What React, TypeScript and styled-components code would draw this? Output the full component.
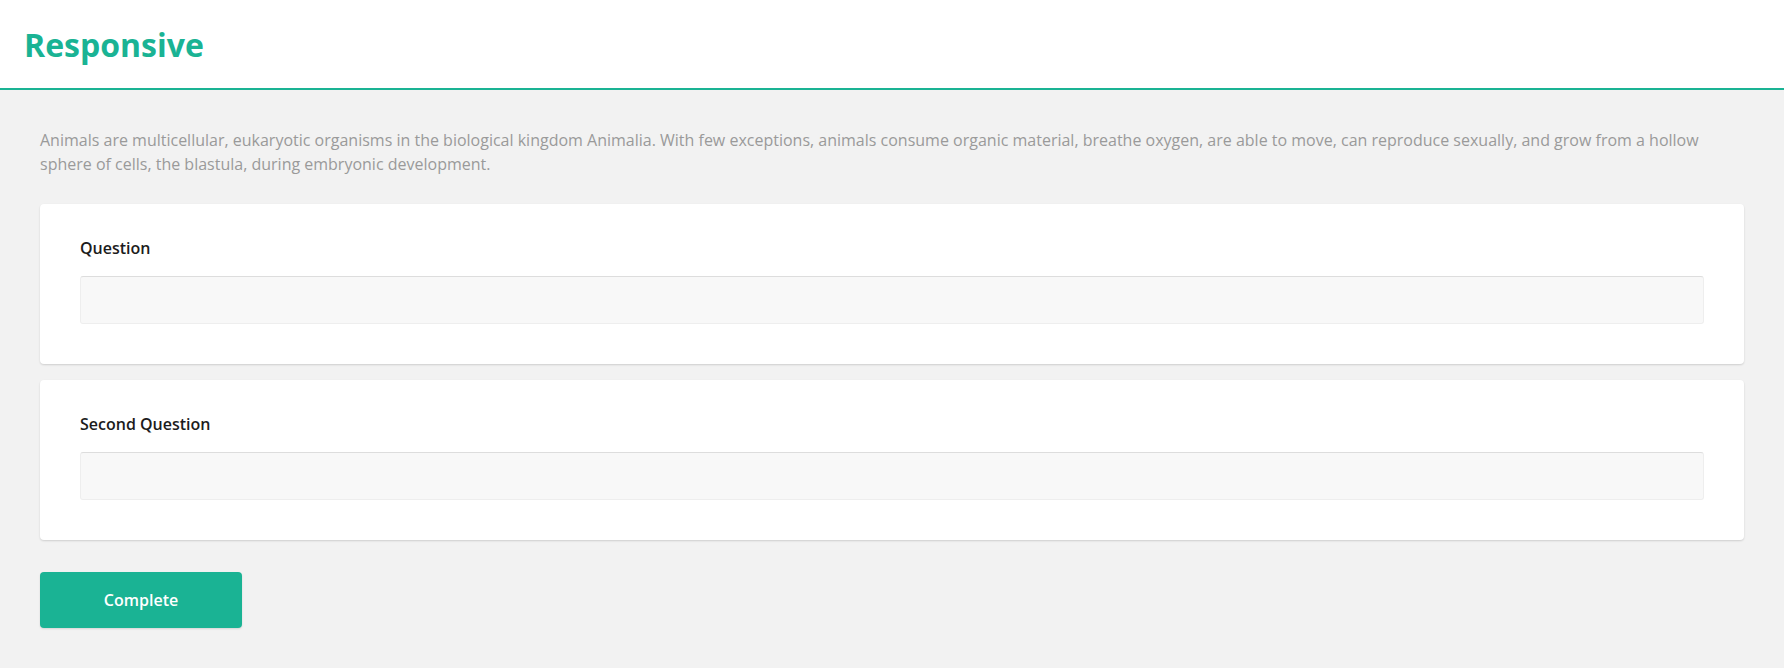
import styled, { createGlobalStyle } from 'styled-components';

const GlobalStyle = createGlobalStyle`
  * {
    box-sizing: border-box;
  }

  body {
    margin: 0;
    background: #f2f2f2;
    font-family: 'Open Sans', 'Noto Sans', sans-serif;
  }
`;

const Header = styled.header`
  display: flex;
  align-items: center;
  height: 90px;
  padding: 0 24px;
  background: #ffffff;
  border-bottom: 2px solid #1ab394;
`;

const Title = styled.h1`
  margin: 0;
  font-size: 32px;
  font-weight: 700;
  color: #1ab394;
`;

const Main = styled.main`
  display: flex;
  flex-direction: column;
  align-items: flex-start;
  padding: 38px 40px 40px;
`;

const Intro = styled.p`
  margin: 0 0 28px;
  font-size: 16px;
  line-height: 24px;
  color: #9a9a9a;
`;

const Questions = styled.div`
  display: flex;
  flex-direction: column;
  gap: 16px;
  width: 100%;
`;

const Card = styled.section`
  display: flex;
  flex-direction: column;
  padding: 32px 40px 40px;
  background: #ffffff;
  border-radius: 4px;
  box-shadow: 0 1px 2px rgba(0, 0, 0, 0.15);
`;

const Label = styled.label`
  margin-bottom: 16px;
  font-size: 16px;
  line-height: 24px;
  font-weight: 600;
  color: #1c1c1c;
`;

const Input = styled.input`
  height: 48px;
  padding: 0 16px;
  font-family: inherit;
  font-size: 16px;
  background: #f8f8f8;
  border: 1px solid #eeeeee;
  border-top-color: #dddddd;
  border-radius: 3px;
  outline: none;
`;

const CompleteButton = styled.button`
  width: 202px;
  height: 56px;
  margin-top: 32px;
  font-family: inherit;
  font-size: 16px;
  font-weight: 600;
  color: #ffffff;
  background: #1ab394;
  border: none;
  border-radius: 4px;
  box-shadow: 0 1px 2px rgba(0, 0, 0, 0.12);
  cursor: pointer;
`;

const questions = ['Question', 'Second Question'];

export default function App() {
  return (
    <>
      <GlobalStyle />
      <Header>
        <Title>Responsive</Title>
      </Header>
      <Main>
        <Intro>
          Animals are multicellular, eukaryotic organisms in the biological kingdom Animalia. With few
          exceptions, animals consume organic material, breathe oxygen, are able to move, can reproduce
          sexually, and grow from a hollow sphere of cells, the blastula, during embryonic development.
        </Intro>
        <Questions>
          {questions.map((q) => (
            <Card key={q}>
              <Label>{q}</Label>
              <Input type="text" />
            </Card>
          ))}
        </Questions>
        <CompleteButton>Complete</CompleteButton>
      </Main>
    </>
  );
}
